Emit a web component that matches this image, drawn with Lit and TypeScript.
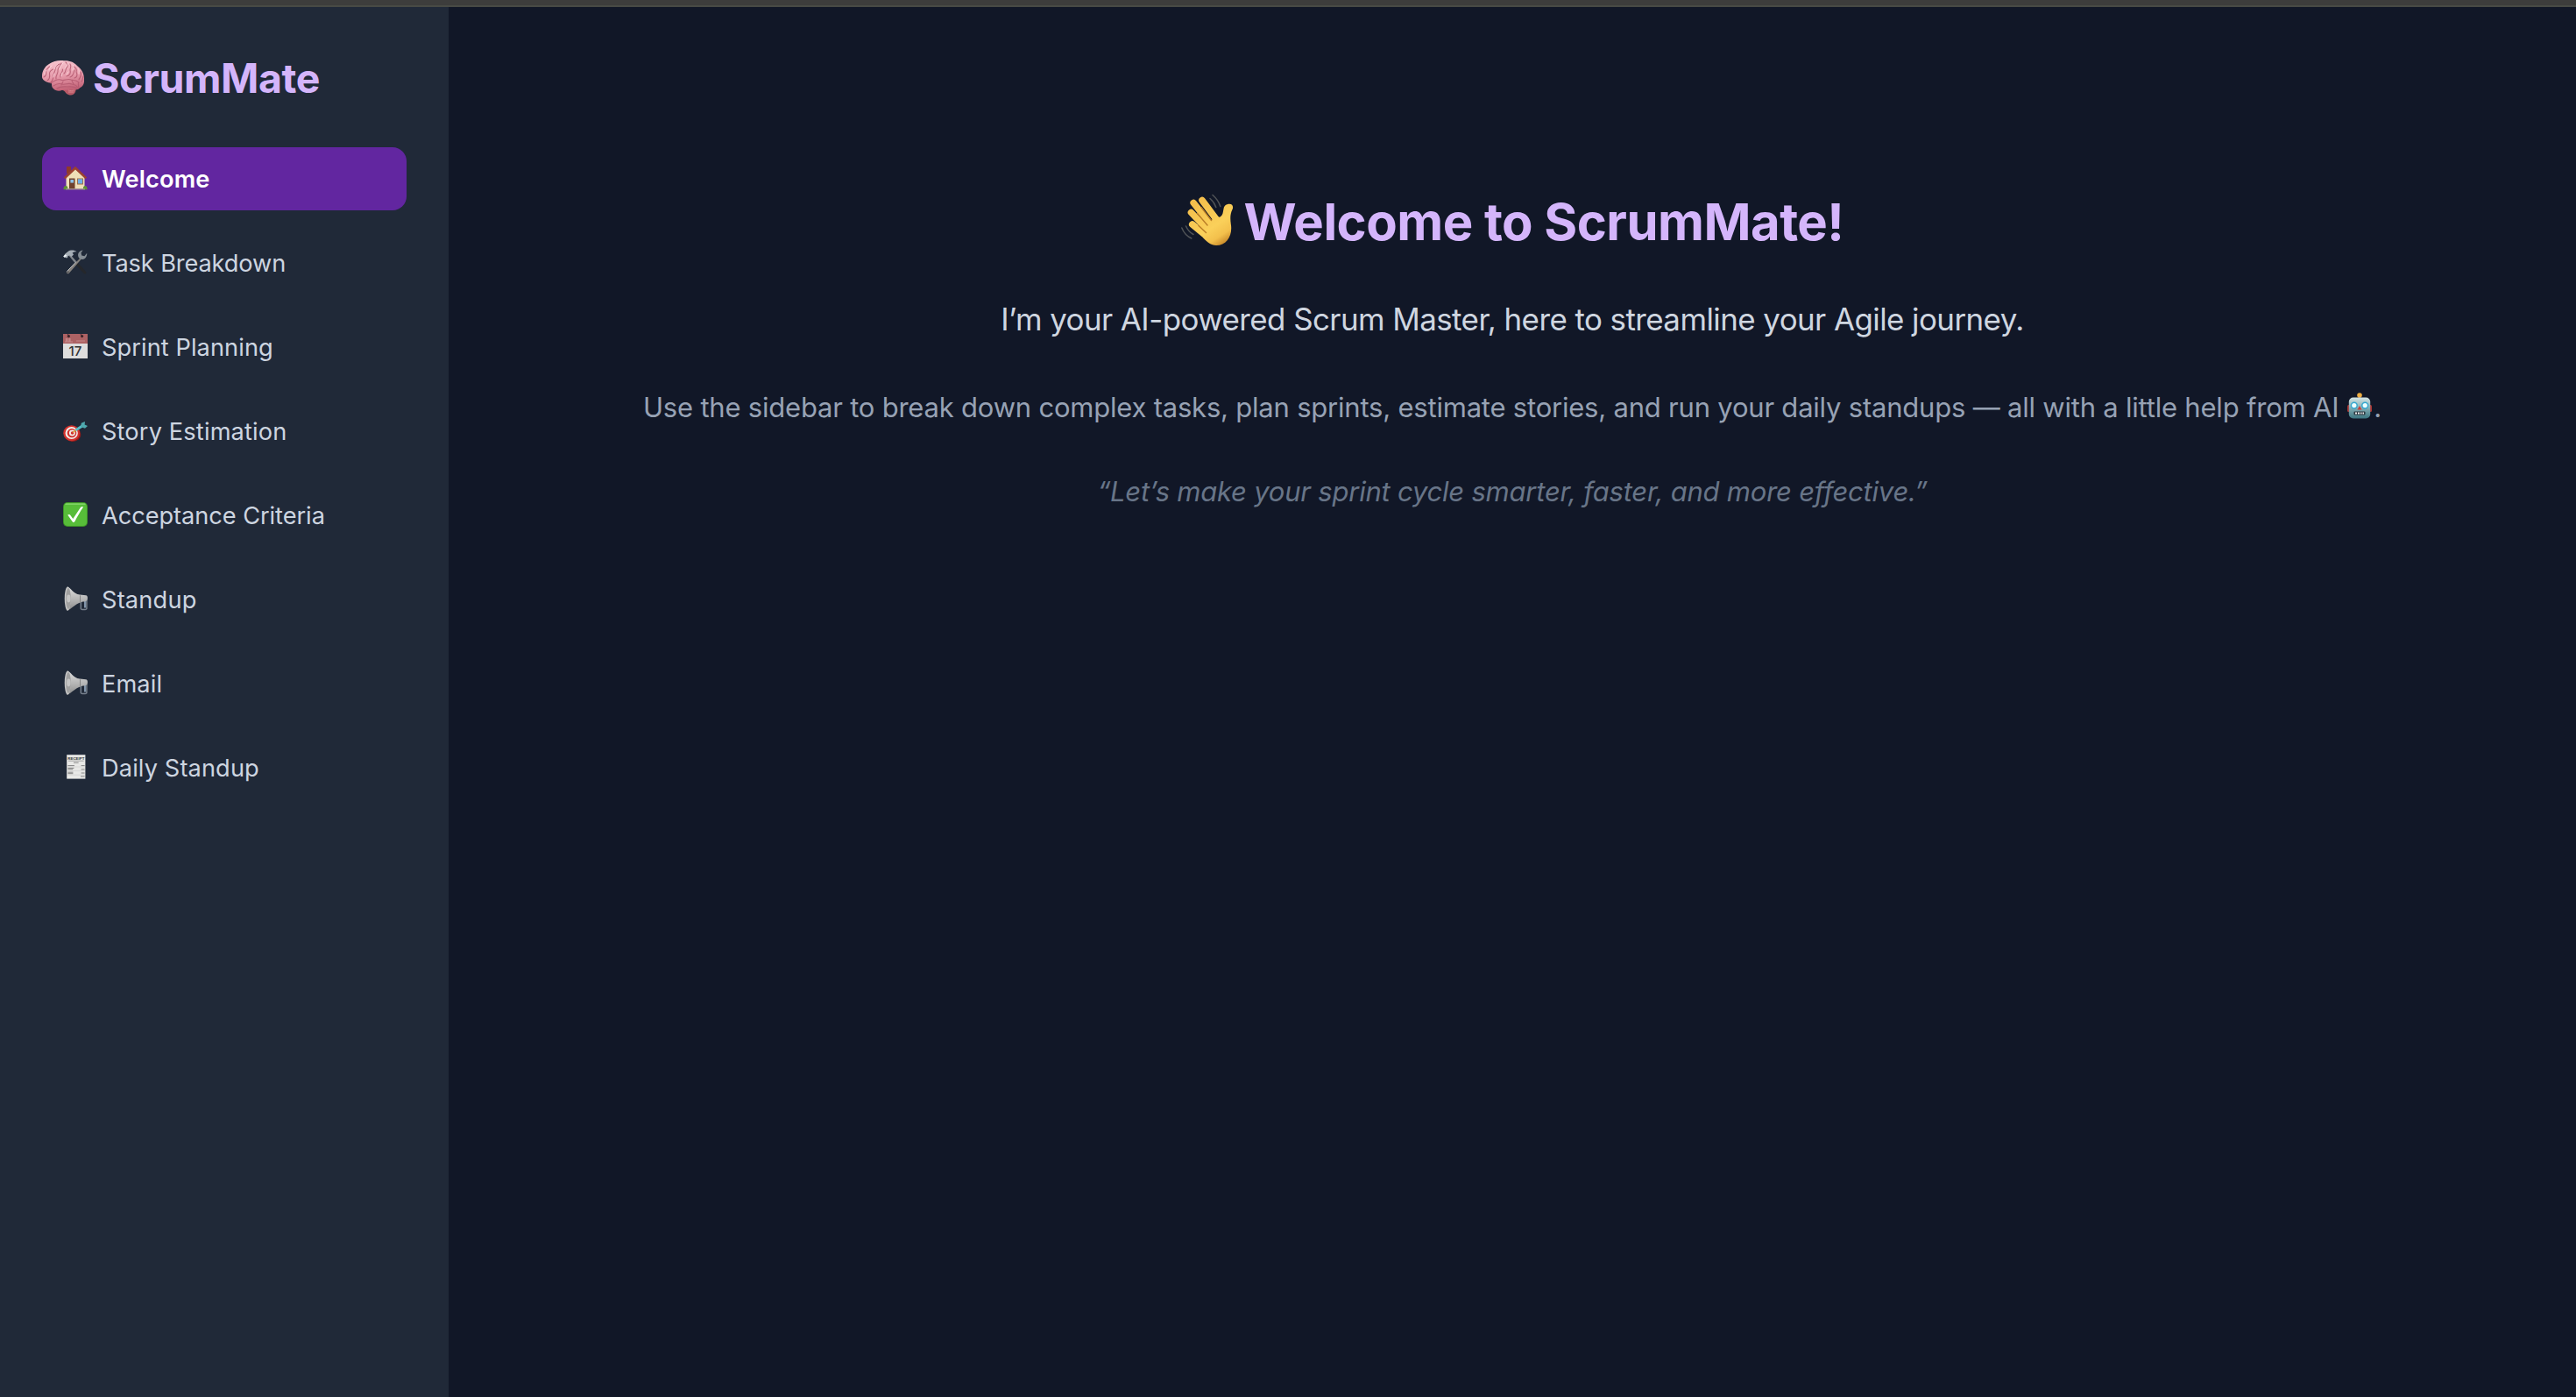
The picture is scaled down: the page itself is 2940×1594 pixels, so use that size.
import { LitElement, html, css, svg } from "lit";
import { customElement, state } from "lit/decorators.js";
import { styleMap } from "lit/directives/style-map.js";

const house = svg`
  <rect x="4" y="1" width="5" height="8" fill="#8f3a2c"/>
  <path d="M3.5 13 14 3.5 24.5 13V26.5H3.5Z" fill="#efdfb8"/>
  <path d="M0.8 13.6 14 0.8 27.2 13.6 25.4 15.2 14 4.6 2.6 15.2Z" fill="#9b4130"/>
  <rect x="7" y="14.5" width="6.5" height="12" fill="#70422d"/>
  <rect x="8.4" y="16" width="3.6" height="3.6" fill="#8fc2e8"/>
  <rect x="16" y="14.5" width="7" height="7" fill="#9b6a45"/>
  <rect x="16.9" y="15.3" width="5.2" height="5.2" fill="#6fb0e8"/>
  <path d="M0.4 26.5c0-3.6 3-4.8 4.8-2.2v2.9H.8ZM23 27.2v-2.8c2-2.6 4.6-1 4.6 2.2v.6Z" fill="#5f9138"/>
  <path d="M3 26.4h22v1H3Z" fill="#a9a491"/>`;

const tools = svg`
  <path d="M15.5 13.6 26 25c.8 1 .4 2-.4 2.4-.9.4-1.7 0-2.4-.8L13.2 15.4Z" fill="#25272b"/>
  <path d="M7.2 4.2 15.2 13.2 13.3 14.8 6.2 6.3Z" fill="#81868c"/>
  <path d="M.3 7.4 1.4 8.6 4.2 9.4 5.4 8.6 5.3 7.4 7.3 6.2 9.5 8 12 5.4 10.6 3.6c1.5-1.2 3.2-1.6 5-1.4C13 .2 8.4-.2 5.6 2L2.5 4.4Z" fill="#a5adb5"/>
  <path d="M.3 7.4 2.8 5.2 4.2 6.8 1.6 8.8Z" fill="#edf2f6"/>
  <path d="M19.3 9.7 4.1 24.8c-.8 1.7.8 3.2 2.5 2.2L20.5 11Z" fill="#84807c"/>
  <path d="M15 13.7 4.5 24.6" stroke="#c7c9cb" stroke-width="1" fill="none"/>
  <path d="M22.600 .600C18.800 1 16.600 4 17.200 7.200c.8 3.600 4.800 5 7.600 2.800 1.900-1.500 2.600-4.200 2.400-6.300L24.400 7.200 21.200 6.400 20.500 3.500Z" fill="#858d94"/>
  <circle cx="5.6" cy="25.4" r=".8" fill="#313540"/>`;

const calendar = svg`
  <rect width="28" height="28" fill="#dedddd"/>
  <rect width="28" height="11" fill="#ad6264"/>
  <path d="M2 9 3.5 9 3.5 5M5 5v4h2V5M8 5v4h3M15 8h10" stroke="#c48789" stroke-width="1.2" fill="none"/>
  <circle cx="6.4" cy="2.6" r="1.6" fill="#3c2429"/><circle cx="21.6" cy="2.6" r="1.6" fill="#3c2429"/>
  <path d="M6.4 2.6 5.3 0M21.6 2.6 20 0" stroke="#3c2429" stroke-width=".8"/>
  <text class="date" x="14" y="24.8" text-anchor="middle">17</text>`;

const target = svg`<g transform="translate(0 3.800) scale(1 .94)">
  <ellipse cx="10.800" cy="15.800" rx="9.500" ry="8.800" fill="#8f1c1b"/>
  <ellipse cx="9.700" cy="14.300" rx="9.400" ry="9.600" fill="#d2302b"/>
  <ellipse cx="9.700" cy="14.100" rx="7.200" ry="7.400" fill="#f2e9e6"/>
  <ellipse cx="10" cy="14.100" rx="5.300" ry="5.500" fill="#cf2f2a"/>
  <ellipse cx="10.400" cy="14" rx="3.500" ry="3.700" fill="#f2e9e6"/>
  <circle cx="10.600" cy="14" r="1.800" fill="#cf2f2a"/>
  <path d="m11 13.500 4-3" stroke="#d9a13a" stroke-width="1.500"/>
  <path d="m15.500 10 6-4.200" stroke="#55bdc8" stroke-width="3" stroke-linecap="round"/>
  <path d="M20 6.600 20.800 2 25 .2 24.600 4 28 5.400 25 8.400Z" fill="#4fa9af"/></g>`;

const check = svg`
  <rect width="28" height="28" rx="5" fill="#3c9126"/>
  <rect x=".9" y=".9" width="26.2" height="26.2" rx="4.2" fill="#57bd39"/>
  <path d="M3 2.2h22" stroke="#8bda70" stroke-width="1.3" stroke-linecap="round"/>
  <path d="M5.200 14.600c1.600-1.200 2.600-.8 3.400.6l2.700 3.900L19.600 6.400c.8-1.300 1.800-1.400 3.500-.9-3.500 5-6.600 10.600-9.700 16.400-.8 1.300-2.200 1.300-2.900.1Z" fill="#fff"/>`;

const megaphone = svg`
  <defs><linearGradient id="horn" x1="0" y1="0" x2="0" y2="1"><stop offset="0" stop-color="#dedede"/><stop offset=".55" stop-color="#b4b4b4"/><stop offset="1" stop-color="#8a8a8a"/></linearGradient></defs>
  <path d="M20.300 15.800v9.600c0 1.400 6.600 1.400 6.600 0v-10" fill="none" stroke="#78818d" stroke-width="1.500"/>
  <path d="M25 13.400v11" stroke="#adc4dc" stroke-width="1.400"/>
  <path d="M5 .4C9 1.500 11 8 19 9.600l7 .6c2.300.4 2.300 3.500 1.500 5.800-3.300 2.600-6 .8-8.500 2.800C14 20.600 10 25.500 4.500 27.800Z" fill="url(#horn)"/>
  <ellipse cx="5.200" cy="14.100" rx="3.500" ry="13.700" fill="#c4c4c4"/>
  <ellipse cx="6" cy="14.100" rx="2.800" ry="12" fill="#a0a0a0"/>
  <ellipse cx="6.300" cy="14" rx="2.200" ry="4.400" fill="#c6c6c6"/>
  <path d="M19.500 10.300v7.600" stroke="#777" stroke-width=".8"/>`;

const receipt = svg`
  <rect x="4.200" y=".2" width="21.200" height="27.400" fill="#e8e8e6"/>
  <text class="receipt" x="14.800" y="5.800" text-anchor="middle">RECEIPT</text>
  <path d="M6 7.200h17.600" stroke="#777" stroke-width=".6"/><path d="M12 9.200h5.600" stroke="#888" stroke-width="1"/>
  <path d="M5.400 12.600h7.500M5.400 15.400h7M5.400 16.800h5.800M5.400 20.200h6M5.400 21.700h6M20.600 12.600h4M20.600 16.900h4M20.600 21h4M20 24.900h4.600" stroke="#777" stroke-width=".9"/>
  <path d="M5 14h19.800M5 18.600h19.800M5 23.200h19.800" stroke="#bbb" stroke-width=".4"/>`;

const brain = svg`
  <defs><linearGradient id="cortex" x1=".4" y1="0" x2=".6" y2="1"><stop offset="0" stop-color="#f7c5cf"/><stop offset=".5" stop-color="#e69aaa"/><stop offset="1" stop-color="#bf5d72"/></linearGradient></defs>
  <path d="M18 33c4 .5 8 1 9 4 2 2 4 2.500 6 2.500 4 0 6-4 5.600-8Z" fill="#b85966"/>
  <path d="M0 18C0 12 3 7 8 4 13 .6 19-.5 25 .2c7-.3 12 2 15 5.800 5 3.500 8 9 8 14.500.6 5-1 9-4.500 10.500-2 2.500-5.500 3-8.500 2-4 1.500-8 1.500-12 .8-3 1.800-8 1-10-1.500-2.500-2.500-1.800-5-2-6.500C6 25.500 1.500 23 .8 21 0 20 0 19 0 18Z" fill="url(#cortex)"/>
  <g fill="none" stroke="#b45a70" stroke-width="1.100" stroke-linecap="round" opacity=".85">
  <path d="M2 19c2-1 3-3 2.500-6 0-3 2-4 4-6M6 23c3-2 3-5 2.500-8 0-3 2-4 4-5M10 25c2-2 3-5 3-8s2-4 2-7 2-5 5-6M16 21c-1-4 3-6 2-10 0-3 3-4 4-8M21 19c-1-4 3-5 2.500-9M25 15c3-2 1-6 4-8 1-2 0-3-2-5M28 18c4-1 5-4 4-7 0-3 2-4 0-7M32 19c4-1 4-5 5-8M37 20c4-1 3-5 2-7 1-3-1-5-3-6M42 22c1-3 4-4 2-9M45 24c2-2 1-4 2-6"/>
  <path d="M10 26c4-3 7-5 11-4 4 2 8-2 12 0 3 1 5 0 9 3M13 29c4-3 7-3 10-2 4 1 7-2 11 0 3 1 4 0 6 3M17 32c4-3 8-2 12-2s7-1 11 2M24 24l-2 4M34 23l2 4M42 25c-2 2 1 3-1 6"/></g>
  <g fill="none" stroke="#ffe0e5" stroke-width="1" stroke-linecap="round" opacity=".8"><path d="M11 6c-2 2-3 3-3 5M18 4c-3 2-3 4-4 6M24 3c-2 2-4 4-4 7M29 3c1 2-2 4-3 6M35 5c2 3 0 4 0 6M41 9c2 2 1 4 1 6M5 11c-2 2-2 4-2 5M14 15l-1 4M23 14l-1 4M30 13l-2 3"/></g>
  <path d="M30 34c2 1 5 0 7 0M30 36h6" stroke="#d8878e" fill="none"/>`;

const wave = svg`
  <defs><linearGradient id="skin" gradientUnits="userSpaceOnUse" x1="10" y1="5" x2="46" y2="59"><stop offset="0" stop-color="#f3bb49"/><stop offset=".65" stop-color="#fad05a"/><stop offset=".85" stop-color="#f3c04c"/><stop offset="1" stop-color="#c98a2a"/></linearGradient></defs>
  <g fill="none" stroke="url(#skin)" stroke-width="7.600" stroke-linecap="round">
    <path d="M24 7.500 43 33"/><path d="M14.200 10.500 36 38"/><path d="M11.500 21.500 32 43"/><path d="M12.800 35 31 50"/>
  </g>
  <path d="M28 45 38 24C42 28 46 27.500 47.500 22.500 49 17 48 13.500 52.500 12.200 58 10.500 60.300 14 58.500 18 56 23 55.800 28 57 36 58.500 48 52 59 40 59 34 59 30 55.500 25 50Z" fill="url(#skin)"/>
  <path d="M23 15.500 34.500 30.500M18.500 22.500 30 36M20 36.500 28.500 44.500" stroke="#b97d27" stroke-width="1.400" fill="none" stroke-linecap="round"/>
  <path d="M36 1.500c4 3.500 7 7.500 8.800 13M33 5.500c3.500 3 5.500 6 6.800 10M.8 39c2 5 5.500 9.500 11 12M5.500 37c1.800 4 4.500 7.500 8.500 9.500" stroke="#505356" stroke-width="1.500" fill="none" stroke-linecap="round"/>`;

const robot = svg`
  <defs><linearGradient id="metal" x1="0" y1="0" x2="0" y2="1"><stop offset="0" stop-color="#d4e4e4"/><stop offset=".5" stop-color="#84adb3"/><stop offset="1" stop-color="#3b7580"/></linearGradient></defs>
  <rect x="0" y="14" width="4" height="8" rx="1.500" fill="#a73533"/><rect x="24" y="14" width="4" height="8" rx="1.500" fill="#a73533"/>
  <rect x="12.500" y="4" width="3" height="4" fill="#8b3832"/><circle cx="14" cy="3" r="2.800" fill="#eead42"/>
  <rect x="1.800" y="5.500" width="24.400" height="24" rx="5" fill="url(#metal)"/>
  <circle cx="7.800" cy="14.600" r="3.400" fill="#eff" stroke="#35a8d0" stroke-width="1.500"/><circle cx="20.200" cy="14.600" r="3.400" fill="#eff" stroke="#35a8d0" stroke-width="1.500"/>
  <path d="m14 15 2.500 4.500h-5Z" fill="#cc3d35"/><rect x="7.500" y="21.500" width="13" height="4" rx="1" fill="#2d3940"/>
  <path d="M9 23.500h2m1 0h2m1 0h1.500m1 0h1.500" stroke="#eee" stroke-width="2"/>`;

interface NavItem { label: string; icon: unknown; tracking: number }

@customElement("app-root")
export class AppRoot extends LitElement {
  static styles = css`
    :host { display: block; height: 100vh; font-family: Inter, "Liberation Sans", sans-serif; }
    .page { display: flex; flex-direction: column; height: 100%; background: #111727; }
    .strip { height: 8px; box-sizing: border-box; background: #3d3d3c; border-bottom: 2px solid #484a45; flex: none; }
    .body { display: flex; flex: 1; min-height: 0; }
    .sidebar { box-sizing: border-box; width: 512px; flex: none; padding: 49px 48px 48px; background: #202938; }
    .brand { display: flex; align-items: center; height: 64px; margin: 0 0 47px; color: #d4b5fb; font-size: 46.5px; font-weight: 700; letter-spacing: -0.42px; white-space: nowrap; }
    .brand svg { width: 48px; height: 40px; margin-right: 10px; flex: none; }
    nav { display: flex; flex-direction: column; gap: 24px; }
    .item { display: flex; align-items: center; box-sizing: border-box; height: 72px; width: 100%; padding: 0 24px; border: 0; border-radius: 16px; background: none; color: #cdd5e0; font: 400 27.2px Inter, "Liberation Sans", sans-serif; text-align: left; white-space: nowrap; }
    .item svg { width: 28px; height: 28px; margin: 0 16px 2px 0; flex: none; }
    .item.active { background: #6226a0; color: #fff; font-weight: 600; }
    .date { font: 500 15px Inter, sans-serif; letter-spacing: 0; fill: #333; }
    .receipt { font: 700 4.4px "Liberation Sans", sans-serif; fill: #333; }
    main { flex: 1; display: flex; flex-direction: column; align-items: center; padding-top: 209px; text-align: center; white-space: nowrap; }
    h1 { display: flex; align-items: center; margin: 0; height: 72px; color: #d4b5fb; font-size: 58px; font-weight: 700; letter-spacing: -0.52px; }
    h1 svg { width: 60px; height: 60px; margin: 0 12px 5px 0; flex: none; }
    p { margin: 0; }
    .lead { margin-top: 47px; font-size: 34.9px; line-height: 56px; letter-spacing: -0.56px; color: #cfd6e0; }
    .hint { margin-top: 49px; font-size: 31px; line-height: 48px; letter-spacing: -0.21px; color: #97a2b4; display: flex; align-items: center; }
    .hint svg { width: 28px; height: 30px; margin: 0 2px 4px 10px; }
    .quote { margin-top: 48px; font-size: 31px; line-height: 48px; letter-spacing: -0.22px; font-style: italic; color: #687588; }
  `;

  @state() private active = 0;

  private items: NavItem[] = [
    { label: "Welcome", icon: house, tracking: 0.15 },
    { label: "Task Breakdown", icon: tools, tracking: -0.12 },
    { label: "Sprint Planning", icon: calendar, tracking: 0.08 },
    { label: "Story Estimation", icon: target, tracking: 0.15 },
    { label: "Acceptance Criteria", icon: check, tracking: -0.05 },
    { label: "Standup", icon: megaphone, tracking: 0.2 },
    { label: "Email", icon: megaphone, tracking: 0.1 },
    { label: "Daily Standup", icon: receipt, tracking: 0.12 },
  ];

  render() {
    return html`<div class="page">
      <div class="strip"></div>
      <div class="body">
        <aside class="sidebar">
          <div class="brand"><svg viewBox="0 0 48 40">${brain}</svg><span>ScrumMate</span></div>
          <nav>${this.items.map((it, i) => html`<button class="item ${i === this.active ? "active" : ""}" @click=${() => (this.active = i)}><svg viewBox="0 0 28 28">${it.icon}</svg><span style=${styleMap({ letterSpacing: `${it.tracking}px` })}>${it.label}</span></button>`)}</nav>
        </aside>
        <main>
          <h1><svg viewBox="0 0 60 60">${wave}</svg><span>Welcome to ScrumMate!</span></h1>
          <p class="lead">I’m your AI-powered Scrum Master, here to streamline your Agile journey.</p>
          <p class="hint"><span>Use the sidebar to break down complex tasks, plan sprints, estimate stories, and run your daily standups — all with a little help from AI</span><svg viewBox="0 0 28 30">${robot}</svg><span>.</span></p>
          <p class="quote">“Let’s make your sprint cycle smarter, faster, and more effective.”</p>
        </main>
      </div>
    </div>`;
  }
}
